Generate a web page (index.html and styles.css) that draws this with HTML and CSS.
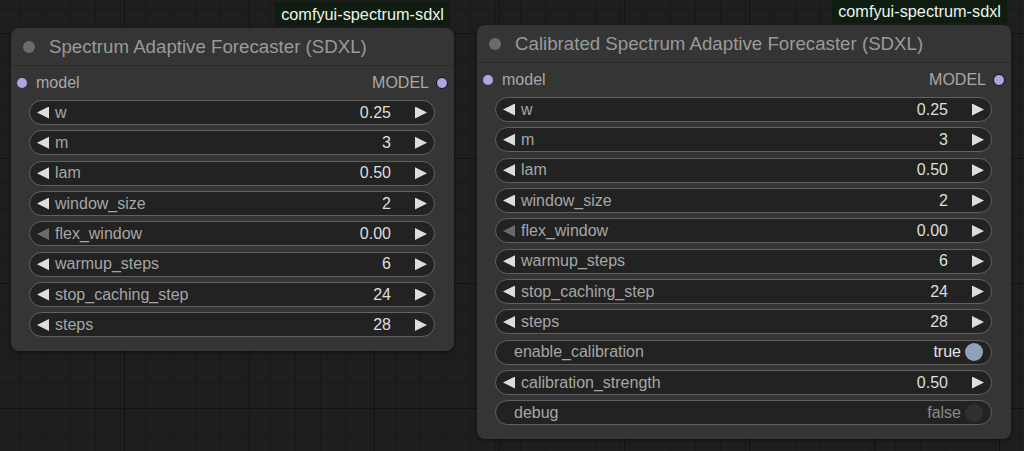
FILE: index.html
```html
<!DOCTYPE html>
<html lang="en">
<head>
    <meta charset="UTF-8">
    <meta name="viewport" content="width=device-width, initial-scale=1.0">
    <title>Spectrum Forecaster Nodes</title>
    <link rel="stylesheet" href="styles.css">
</head>
<body>
    <main class="canvas">
        <!-- Spectrum Adaptive Forecaster -->
        <div class="node-wrap first">
            <div class="badge">comfyui-spectrum-sdxl</div>
            <div class="node">
                <div class="node-title"><span class="status"></span>Spectrum Adaptive Forecaster (SDXL)</div>
                <div class="slots">
                    <span class="slot in"></span>
                    <span class="slot-name">model</span>
                    <span class="slot-name out-name">MODEL</span>
                    <span class="slot out"></span>
                </div>
                <div class="widgets">
                    <div class="widget"><span class="arrow left"></span><span class="label">w</span><span class="value">0.25</span><span class="arrow right"></span></div>
                    <div class="widget"><span class="arrow left"></span><span class="label">m</span><span class="value">3</span><span class="arrow right"></span></div>
                    <div class="widget"><span class="arrow left"></span><span class="label">lam</span><span class="value">0.50</span><span class="arrow right"></span></div>
                    <div class="widget"><span class="arrow left"></span><span class="label">window_size</span><span class="value">2</span><span class="arrow right"></span></div>
                    <div class="widget"><span class="arrow left dim"></span><span class="label">flex_window</span><span class="value">0.00</span><span class="arrow right"></span></div>
                    <div class="widget"><span class="arrow left"></span><span class="label">warmup_steps</span><span class="value">6</span><span class="arrow right"></span></div>
                    <div class="widget"><span class="arrow left"></span><span class="label">stop_caching_step</span><span class="value">24</span><span class="arrow right"></span></div>
                    <div class="widget"><span class="arrow left"></span><span class="label">steps</span><span class="value">28</span><span class="arrow right"></span></div>
                </div>
            </div>
        </div>

        <!-- Calibrated variant -->
        <div class="node-wrap second">
            <div class="badge">comfyui-spectrum-sdxl</div>
            <div class="node">
                <div class="node-title"><span class="status"></span>Calibrated Spectrum Adaptive Forecaster (SDXL)</div>
                <div class="slots">
                    <span class="slot in"></span>
                    <span class="slot-name">model</span>
                    <span class="slot-name out-name">MODEL</span>
                    <span class="slot out"></span>
                </div>
                <div class="widgets">
                    <div class="widget"><span class="arrow left"></span><span class="label">w</span><span class="value">0.25</span><span class="arrow right"></span></div>
                    <div class="widget"><span class="arrow left"></span><span class="label">m</span><span class="value">3</span><span class="arrow right"></span></div>
                    <div class="widget"><span class="arrow left"></span><span class="label">lam</span><span class="value">0.50</span><span class="arrow right"></span></div>
                    <div class="widget"><span class="arrow left"></span><span class="label">window_size</span><span class="value">2</span><span class="arrow right"></span></div>
                    <div class="widget"><span class="arrow left dim"></span><span class="label">flex_window</span><span class="value">0.00</span><span class="arrow right"></span></div>
                    <div class="widget"><span class="arrow left"></span><span class="label">warmup_steps</span><span class="value">6</span><span class="arrow right"></span></div>
                    <div class="widget"><span class="arrow left"></span><span class="label">stop_caching_step</span><span class="value">24</span><span class="arrow right"></span></div>
                    <div class="widget"><span class="arrow left"></span><span class="label">steps</span><span class="value">28</span><span class="arrow right"></span></div>
                    <div class="widget toggle"><span class="label">enable_calibration</span><span class="state on">true</span><span class="knob on"></span></div>
                    <div class="widget"><span class="arrow left"></span><span class="label">calibration_strength</span><span class="value">0.50</span><span class="arrow right"></span></div>
                    <div class="widget toggle"><span class="label">debug</span><span class="state">false</span><span class="knob"></span></div>
                </div>
            </div>
        </div>
    </main>
</body>
</html>
```

FILE: styles.css
```css
html, body {
    margin: 0;
    padding: 0;
    height: 100%;
}
body {
    overflow: hidden;
    font-family: "Liberation Sans", Arial, sans-serif;
    background-color: #1e1e1e;
    /* canvas grid: heavy lines every 125px, light ones every 25px */
    background-image:
        linear-gradient(90deg, #131313 1px, transparent 1px),
        linear-gradient(#131313 1px, transparent 1px),
        linear-gradient(90deg, #191919 1px, transparent 1px),
        linear-gradient(#191919 1px, transparent 1px);
    background-size: 125px 125px, 125px 125px, 25px 25px, 25px 25px;
    background-position: 124px 0, 0 33px, 20px 0, 0 8px;
}
.canvas {
    display: flex;
    align-items: flex-start;
    gap: 23px;
    padding-left: 11px;
}

/* node + its source badge */
.node-wrap {
    display: flex;
    flex-direction: column;
    align-items: flex-end;
}
.node-wrap.first {
    width: 443px;
    margin-top: 2px;
}
.node-wrap.second {
    width: 534px;
    margin-top: -1px;
}
.badge {
    height: 24px;
    line-height: 24px;
    padding: 0 6px;
    margin: 0 4px 2px 0;
    background-color: #0e1d0f;
    color: #eef2ee;
    font-size: 16.3px;
}
.node {
    align-self: stretch;
    background-color: #353535;
    border-radius: 8px;
    box-shadow: 0 1px 4px rgba(0, 0, 0, 0.5);
    padding-bottom: 14px;
}
.node-title {
    height: 37px;
    display: flex;
    align-items: center;
    padding-left: 12px;
    color: #9a9a9a;
    font-size: 18.7px;
    border-bottom: 1px solid #2b2b2b;
}
.status {
    width: 12px;
    height: 12px;
    border-radius: 50%;
    background-color: #6b6b6b;
    margin-right: 14px;
}

/* input / output slots */
.slots {
    height: 34px;
    display: flex;
    align-items: center;
    padding: 0 6px 0 6px;
    color: #a8a8a8;
    font-size: 16px;
}
.slot {
    width: 10px;
    height: 10px;
    border-radius: 50%;
    background-color: #b3a2e3;
}
.slot.out {
    border: 1px solid #111;
}
.slot-name {
    margin-left: 9px;
}
.out-name {
    margin-left: auto;
    margin-right: 7px;
}

/* widgets */
.widgets {
    display: flex;
    flex-direction: column;
    gap: 5.35px;
    padding: 0 19px 0 18px;
}
.widget {
    height: 25px;
    box-sizing: border-box;
    display: flex;
    align-items: center;
    padding: 0 7px;
    border: 1px solid #616161;
    border-radius: 13px;
    background-color: #222;
    font-size: 16px;
}
.arrow {
    width: 12px;
    height: 12px;
    background-color: #ddd;
}
.arrow.left {
    clip-path: polygon(100% 0, 0 50%, 100% 100%);
}
.arrow.right {
    clip-path: polygon(0 0, 100% 50%, 0 100%);
}
.arrow.dim {
    background-color: #6a6a6a;
}
.label {
    flex: 1;
    margin-left: 6px;
    color: #a6a6a6;
}
.value {
    margin-right: 24px;
    color: #dedede;
}
.widget.toggle {
    padding: 0 8px 0 18px;
}
.toggle .label {
    margin-left: 0;
}
.state {
    margin-right: 4px;
    color: #8a8a8a;
}
.state.on {
    color: #e4e4e4;
}
.knob {
    width: 18px;
    height: 18px;
    border-radius: 50%;
    background-color: #303030;
}
.knob.on {
    background-color: #8ea2bc;
}
```
